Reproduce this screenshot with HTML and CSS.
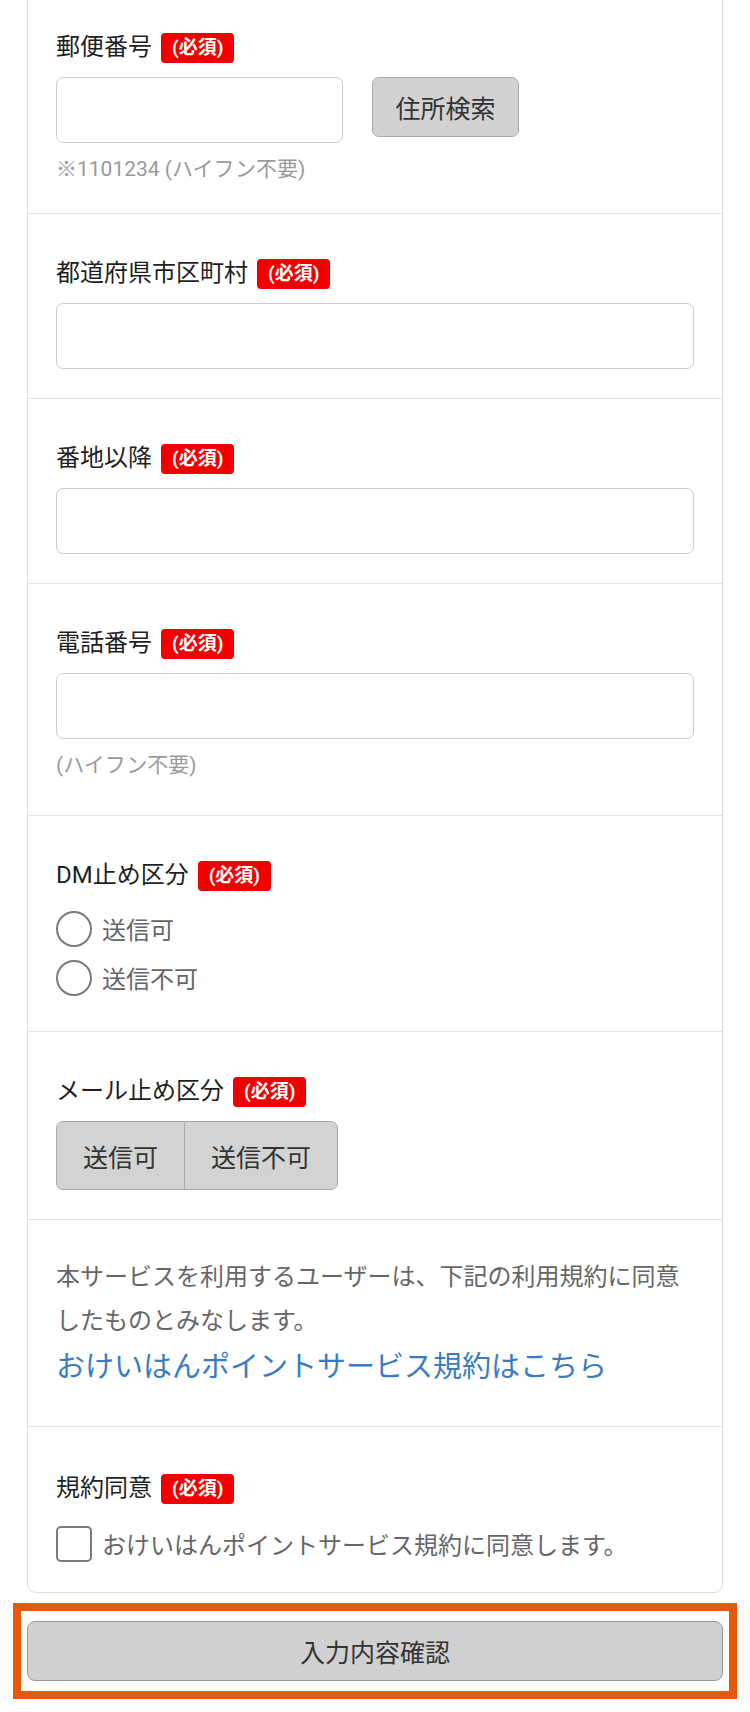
FILE: index.html
```html
<!DOCTYPE html>
<html lang="ja">
<head>
<meta charset="utf-8">
<title>会員情報入力</title>
<link rel="stylesheet" href="styles.css">
</head>
<body>
<div class="card">
  <div class="section section-first">
    <div class="label-row"><span class="label">郵便番号</span><span class="badge">(必須)</span></div>
    <div class="postal-row">
      <input class="field field-postal" type="text">
      <button class="btn-search" type="button">住所検索</button>
    </div>
    <p class="hint">※1101234 (ハイフン不要)</p>
  </div>
  <div class="section">
    <div class="label-row"><span class="label">都道府県市区町村</span><span class="badge">(必須)</span></div>
    <input class="field" type="text">
  </div>
  <div class="section">
    <div class="label-row"><span class="label">番地以降</span><span class="badge">(必須)</span></div>
    <input class="field" type="text">
  </div>
  <div class="section section-tel">
    <div class="label-row"><span class="label">電話番号</span><span class="badge">(必須)</span></div>
    <input class="field" type="text">
    <p class="hint">(ハイフン不要)</p>
  </div>
  <div class="section">
    <div class="label-row"><span class="label">DM止め区分</span><span class="badge">(必須)</span></div>
    <div class="choice-list">
      <label class="choice"><span class="radio"></span><span class="choice-text">送信可</span></label>
      <label class="choice"><span class="radio"></span><span class="choice-text">送信不可</span></label>
    </div>
  </div>
  <div class="section">
    <div class="label-row"><span class="label">メール止め区分</span><span class="badge">(必須)</span></div>
    <div class="toggle-group">
      <button class="toggle" type="button">送信可</button>
      <button class="toggle" type="button">送信不可</button>
    </div>
  </div>
  <div class="section section-terms">
    <p class="terms-text">本サービスを利用するユーザーは、下記の利用規約に同意したものとみなします。</p>
    <a class="terms-link" href="#">おけいはんポイントサービス規約はこちら</a>
  </div>
  <div class="section section-last">
    <div class="label-row"><span class="label">規約同意</span><span class="badge">(必須)</span></div>
    <div class="choice-list choice-list-agree">
      <label class="choice"><span class="checkbox"></span><span class="choice-text">おけいはんポイントサービス規約に同意します。</span></label>
    </div>
  </div>
</div>
<div class="submit-frame">
  <button class="btn-submit" type="button">入力内容確認</button>
</div>
</body>
</html>
```

FILE: styles.css
```css
html, body {
  margin: 0;
  padding: 0;
  background: #ffffff;
}
body {
  font-family: Roboto, "Noto Sans CJK JP", sans-serif;
  color: #222222;
  width: 750px;
}
.card {
  margin: 0 27px;
  border: 1px solid #dddddd;
  border-top: none;
  border-radius: 0 0 9px 9px;
  background: #ffffff;
}
.section {
  padding: 44px 28px 29px;
  border-top: 1px solid #e3e3e3;
}
.section-first {
  border-top: none;
  padding-top: 32px;
  padding-bottom: 29px;
}
.section-tel {
  padding-bottom: 35px;
}
.section-terms {
  padding-top: 35px;
  padding-bottom: 35px;
}
.section-last {
  padding-top: 46px;
  padding-bottom: 24px;
}
.label-row {
  display: flex;
  align-items: center;
  height: 31px;
  gap: 9px;
}
.label {
  font-size: 24px;
  line-height: 31px;
  color: #1f1f1f;
}
.badge {
  display: inline-block;
  height: 30px;
  line-height: 30px;
  padding: 0 11px;
  background: #f20000;
  color: #ffffff;
  font-size: 19px;
  font-weight: 700;
  border-radius: 4px;
}
.field {
  display: block;
  box-sizing: border-box;
  width: 100%;
  height: 66px;
  margin: 14px 0 0;
  border: 1px solid #cccccc;
  border-radius: 7px;
  background: #ffffff;
  font-size: 24px;
  padding: 0 12px;
  font-family: inherit;
}
.postal-row {
  display: flex;
  align-items: flex-start;
  gap: 29px;
  margin-top: 14px;
}
.field-postal {
  width: 287px;
  margin: 0;
}
.btn-search {
  box-sizing: border-box;
  width: 147px;
  height: 60px;
  background: #d2d2d2;
  border: 1px solid #aaaaaa;
  border-radius: 7px;
  font-family: inherit;
  font-size: 25px;
  color: #333333;
  padding: 0;
}
.hint {
  margin: 11px 0 0;
  font-size: 21px;
  line-height: 30px;
  color: #999999;
}
.choice-list {
  margin-top: 13px;
}
.choice-list-agree {
  margin-top: 15px;
}
.choice {
  display: flex;
  align-items: center;
  height: 49px;
  gap: 10px;
}
.radio {
  box-sizing: border-box;
  width: 36px;
  height: 36px;
  border: 2px solid #7a7a7a;
  border-radius: 50%;
  background: #ffffff;
}
.checkbox {
  box-sizing: border-box;
  width: 36px;
  height: 36px;
  border: 2px solid #7a7a7a;
  border-radius: 5px;
  background: #ffffff;
}
.choice-text {
  font-size: 24px;
  color: #666666;
}
.toggle-group {
  display: inline-flex;
  margin-top: 14px;
  border: 1px solid #aaaaaa;
  border-radius: 7px;
  background: #d3d3d3;
  overflow: hidden;
}
.toggle {
  height: 67px;
  padding: 0 26px;
  border: none;
  background: transparent;
  font-family: inherit;
  font-size: 25px;
  color: #333333;
}
.toggle + .toggle {
  border-left: 1px solid #a8a8a8;
}
.terms-text {
  margin: 0;
  font-size: 24px;
  line-height: 44px;
  color: #666666;
}
.terms-link {
  display: block;
  font-size: 29px;
  line-height: 48px;
  color: #3a7cbf;
  text-decoration: none;
}
.submit-frame {
  margin: 10px 13px 0;
  border: 8px solid #e8580c;
  padding: 10px 6px;
}
.btn-submit {
  display: block;
  box-sizing: border-box;
  width: 100%;
  height: 60px;
  background: #d0d0d0;
  border: 1px solid #999999;
  border-radius: 8px;
  font-family: inherit;
  font-size: 25px;
  color: #333333;
}
```
